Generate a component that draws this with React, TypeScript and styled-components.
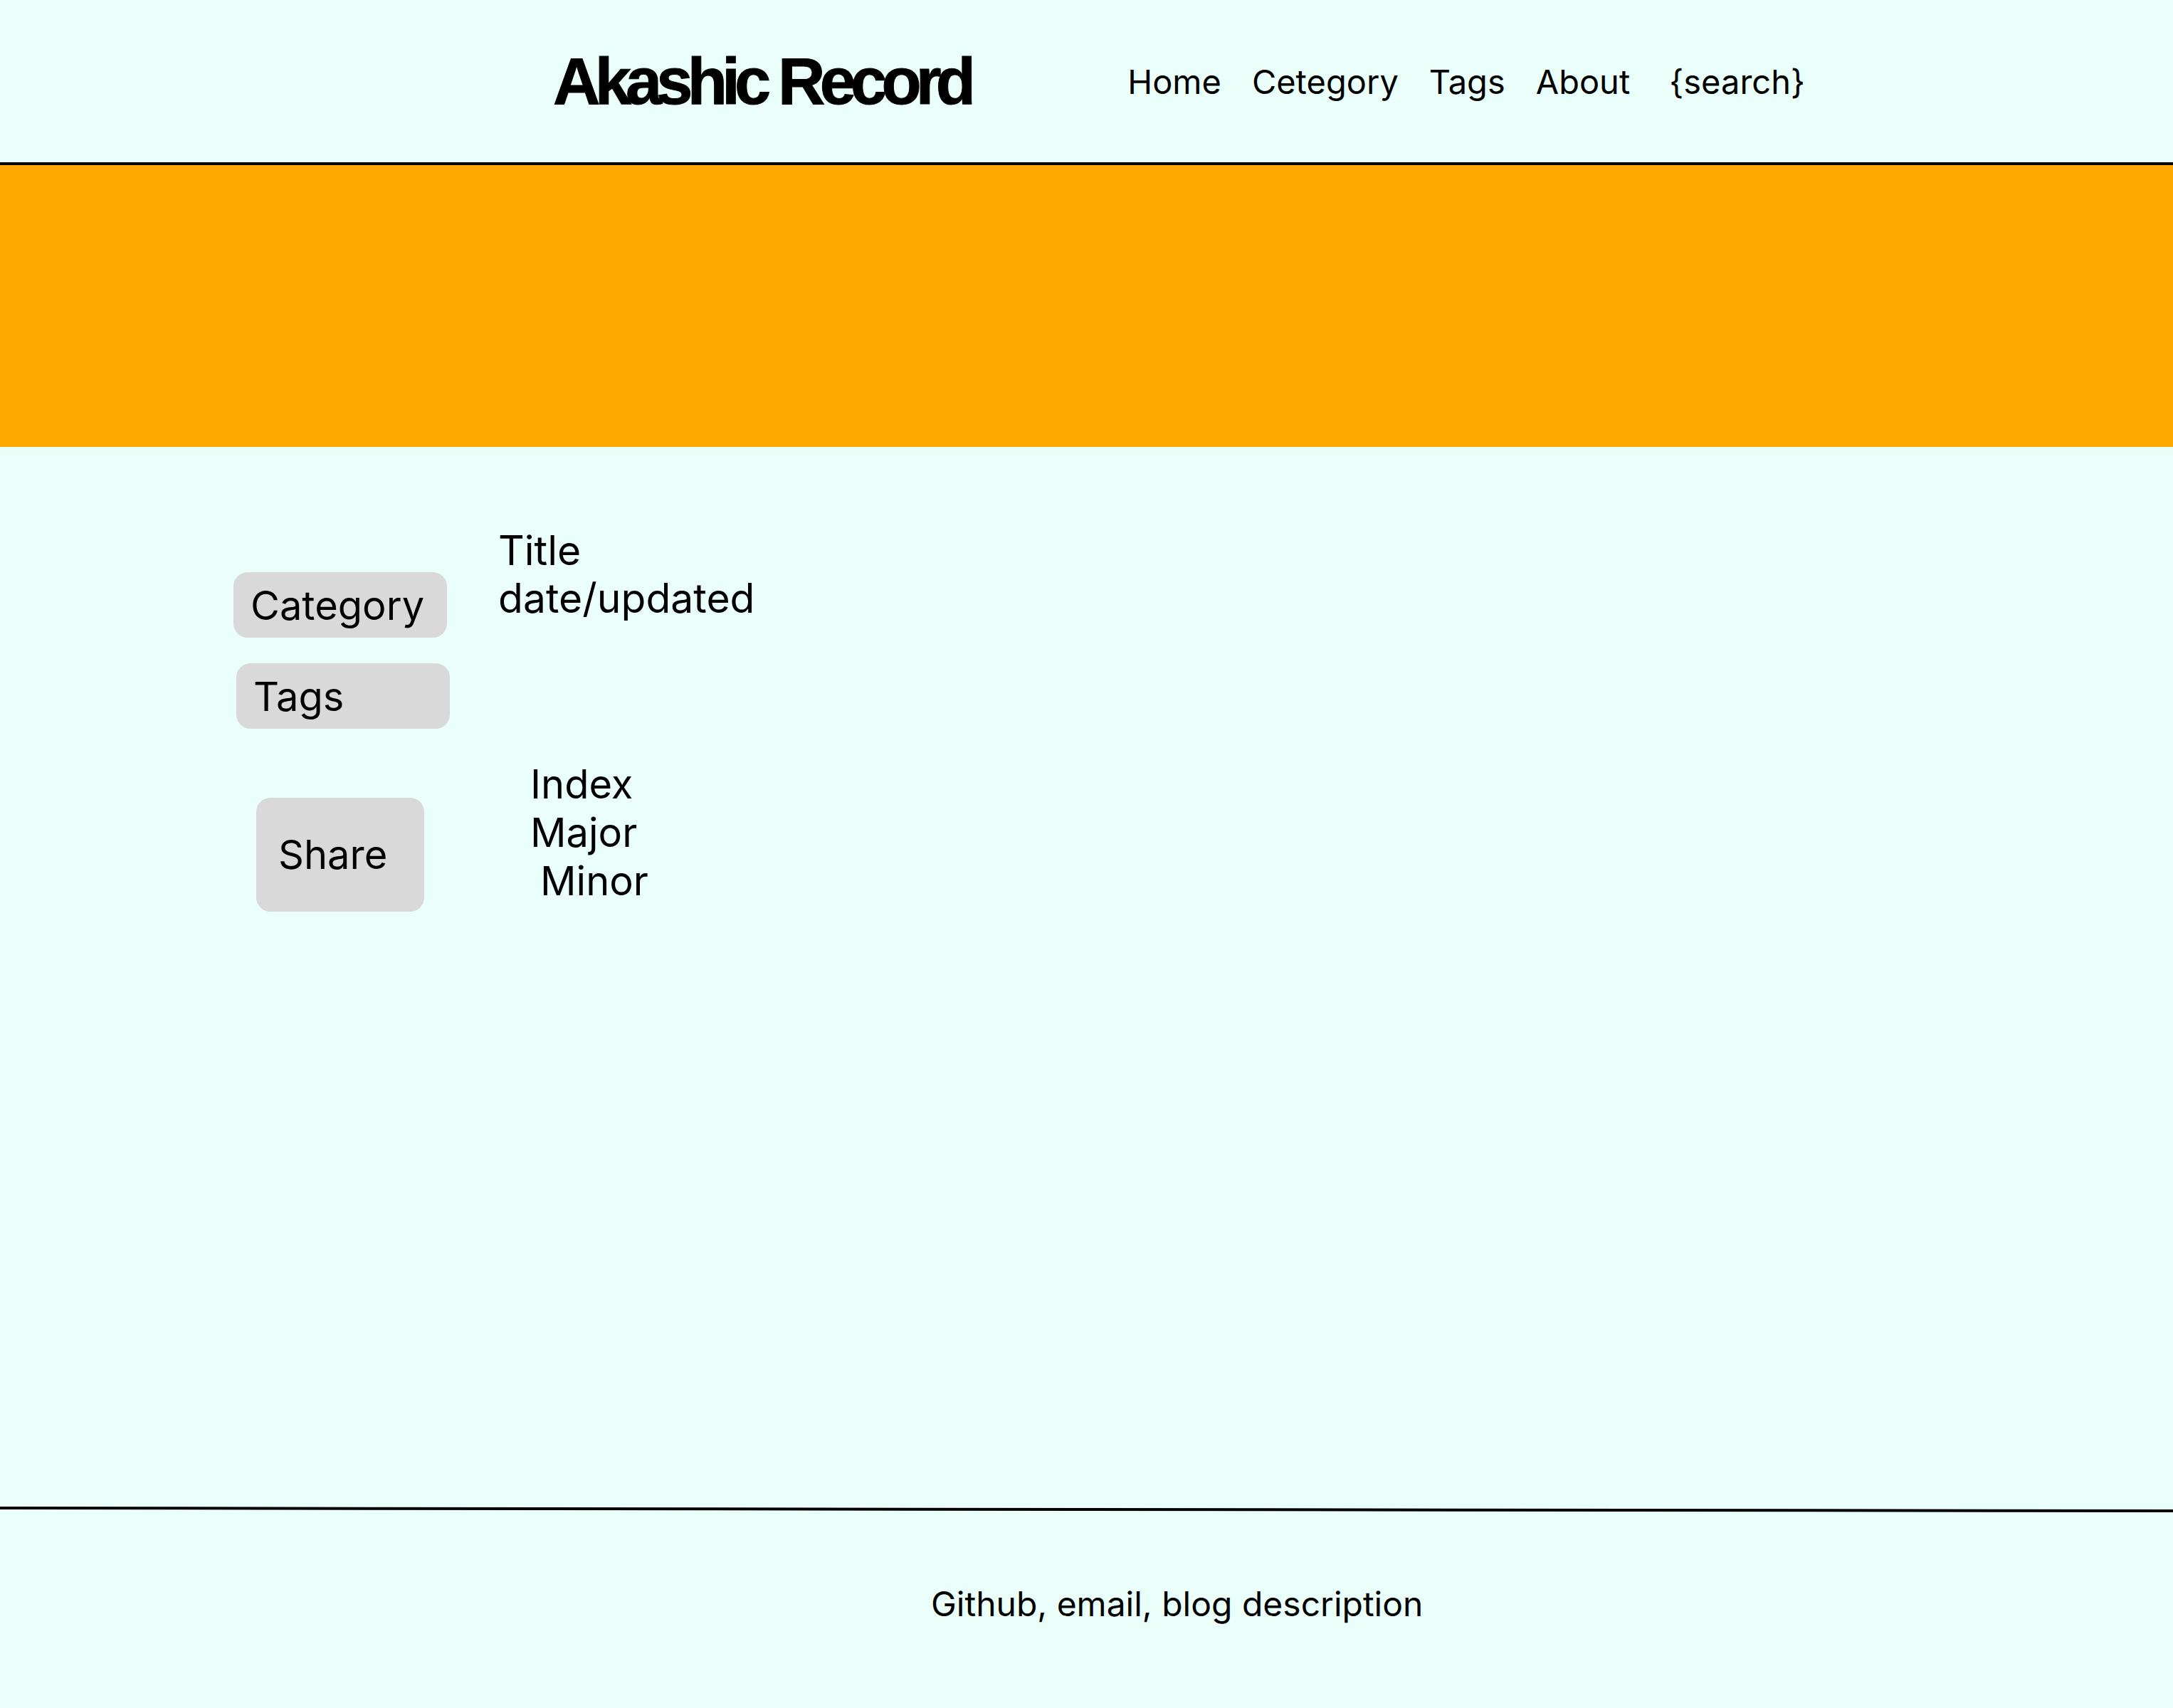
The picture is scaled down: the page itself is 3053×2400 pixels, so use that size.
import React from "react";
import styled, { createGlobalStyle } from "styled-components";

const GlobalStyle = createGlobalStyle`
  html, body {
    margin: 0;
    padding: 0;
    background: #eafffa;
  }
  body {
    font-family: Inter, "Noto Sans", sans-serif;
    color: #000;
  }
  * { box-sizing: border-box; }
`;

const Page = styled.div`
  width: 3053px;
  min-height: 2400px;
  background: #eafffa;
  display: flex;
  flex-direction: column;
`;

const Header = styled.header`
  height: 232px;
  border-bottom: 4px solid #000;
  display: flex;
  align-items: center;
  padding-left: 777px;
  gap: 221px;
`;

const Logo = styled.div`
  font-family: "Liberation Sans", Arial, sans-serif;
  font-weight: 700;
  font-size: 92px;
  letter-spacing: -7.8px;
  line-height: 1;
  white-space: nowrap;
  -webkit-text-stroke: 1px #000;
`;

const Nav = styled.nav`
  display: flex;
  align-items: center;
  gap: 43px;
  font-size: 47px;
  line-height: 1;
`;

const NavItem = styled.span<{ $extra?: number }>`
  margin-left: ${(p) => p.$extra ?? 0}px;
  white-space: nowrap;
`;

const Hero = styled.section`
  height: 396px;
  background: #ffa900;
`;

const Main = styled.main`
  height: 1488px;
  display: flex;
  padding-left: 327px;
`;

const Side = styled.aside`
  width: 373px;
  padding-top: 176px;
  display: flex;
  flex-direction: column;
  align-items: flex-start;
`;

const Pill = styled.div<{ $shift: number; $top: number }>`
  width: 300px;
  height: 92px;
  margin-left: ${(p) => p.$shift}px;
  margin-top: ${(p) => p.$top}px;
  padding: 14px 0 0 24px;
  background: #d9d9d9;
  border-radius: 20px;
  font-size: 56px;
  line-height: 67px;
`;

const ShareBox = styled.div`
  width: 236px;
  height: 160px;
  margin-left: 33px;
  margin-top: 97px;
  padding-left: 31px;
  background: #d9d9d9;
  border-radius: 20px;
  display: flex;
  align-items: center;
  font-size: 56px;
  line-height: 67px;
`;

const Article = styled.article`
  padding-top: 112px;
  display: flex;
  flex-direction: column;
`;

const TextLine = styled.div`
  font-size: 57px;
  line-height: 67px;
  white-space: nowrap;
`;

const Toc = styled.div`
  margin-top: 194px;
  display: flex;
  flex-direction: column;
`;

const TocLine = styled.div<{ $indent: number }>`
  font-size: 56px;
  line-height: 68px;
  padding-left: ${(p) => p.$indent}px;
`;

const Footer = styled.footer`
  height: 284px;
  display: flex;
  flex-direction: column;
`;

const Rule = styled.svg`
  display: block;
  width: 100%;
  height: 10px;
`;

const FooterText = styled.div`
  padding-left: 1308px;
  padding-top: 99px;
  font-size: 48px;
  line-height: 1.2;
  white-space: nowrap;
`;

export default function App() {
  return (
    <>
      <GlobalStyle />
      <Page>
        <Header>
          <Logo>Akashic Record</Logo>
          <Nav>
            <NavItem>Home</NavItem>
            <NavItem>Cetegory</NavItem>
            <NavItem>Tags</NavItem>
            <NavItem>About</NavItem>
            <NavItem $extra={12}>{"{search}"}</NavItem>
          </Nav>
        </Header>
        <Hero />
        <Main>
          <Side>
            <Pill $shift={1} $top={0}>Category</Pill>
            <Pill $shift={5} $top={36}>Tags</Pill>
            <ShareBox>Share</ShareBox>
          </Side>
          <Article>
            <TextLine>Title</TextLine>
            <TextLine>date/updated</TextLine>
            <Toc>
              <TocLine $indent={45}>Index</TocLine>
              <TocLine $indent={45}>Major</TocLine>
              <TocLine $indent={59}>Minor</TocLine>
            </Toc>
          </Article>
        </Main>
        <Footer>
          <Rule viewBox="0 0 3053 10" preserveAspectRatio="none">
            <line x1="0" y1="3" x2="3053" y2="7" stroke="#000" strokeWidth="4" />
          </Rule>
          <FooterText>Github, email, blog description</FooterText>
        </Footer>
      </Page>
    </>
  );
}
